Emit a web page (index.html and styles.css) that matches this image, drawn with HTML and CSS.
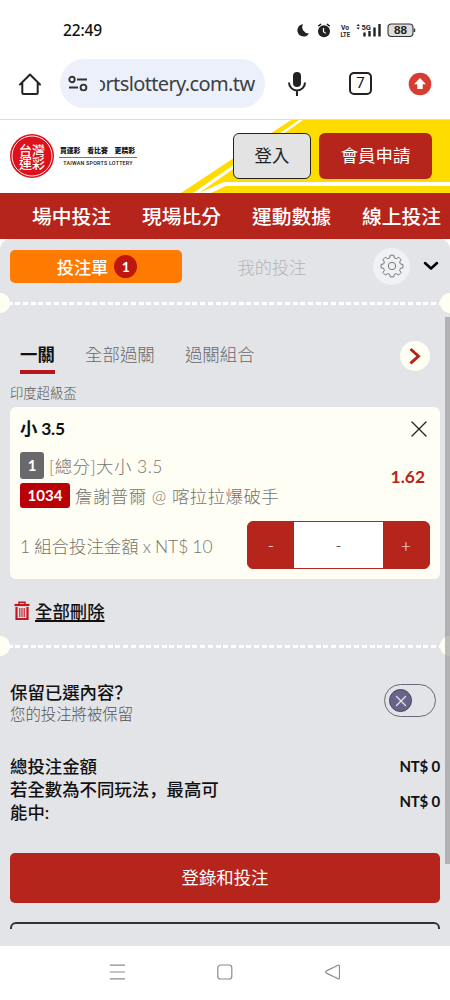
FILE: index.html
```html
<!DOCTYPE html>
<html lang="zh-Hant">
<head>
<meta charset="utf-8">
<title>台灣運彩</title>
<link rel="stylesheet" href="styles.css">
</head>
<body>
<div class="phone">
  <div class="status">
    <span class="clock">22:49</span>
    <svg class="status-icons" width="120" height="18" viewBox="296 22 120 18">
      <path d="M303 24.2a6.2 6.2 0 1 0 6 9.2 6.3 6.3 0 0 1-6-9.2z" fill="#222"/>
      <circle cx="324" cy="31.3" r="6" fill="#222"/>
      <path d="M318.3 26.2l2.8-2.2M329.700 26.200l-2.800-2.200" stroke="#222" stroke-width="1.5"/>
      <path d="M323.500 28v3.600l2.300 1.800" stroke="#fff" stroke-width="1.200" fill="none"/>
      <text x="341" y="29.500" class="tiny" textLength="8" lengthAdjust="spacingAndGlyphs">Vo</text>
      <text x="340.500" y="36.500" class="tiny" textLength="9.500" lengthAdjust="spacingAndGlyphs">LTE</text>
      <path d="M356.500 26l1.700-2 1.700 2zM356.500 27.500l1.700 2 1.700-2z" fill="#222"/>
      <text x="361.500" y="29.500" class="tiny5" textLength="9.500" lengthAdjust="spacingAndGlyphs">5G</text>
      <path d="M364.500 36.500v-4M369.500 36.500v-5.500M374.500 36.500v-9M379.500 36.500v-12.500" stroke="#222" stroke-width="2.400"/>
      <rect x="388" y="24" width="25" height="12.500" rx="3.500" fill="#ddd" stroke="#333" stroke-width="1.100"/>
      <path d="M414.500 28.500v3.500" stroke="#333" stroke-width="1.400"/>
      <text x="394" y="34.200" class="battery" textLength="13" lengthAdjust="spacingAndGlyphs">88</text>
    </svg>
  </div>
  <div class="browser">
    <svg class="home" width="24" height="24" viewBox="0 0 24 24" fill="none" stroke="#222" stroke-width="2" stroke-linejoin="round" stroke-linecap="round"><path d="M2 12.500L12 2.500l10 10M4.300 11.500V20.500q0 1.500 1.500 1.500h12.400q1.500 0 1.500-1.500V11.500"/></svg>
    <div class="omnibox">
      <svg width="20" height="18" viewBox="0 0 20 18" fill="none" stroke="#333" stroke-width="1.900"><circle cx="4" cy="4.500" r="2.700"/><path d="M9 4.500h10M1 12.500h9"/><circle cx="15.500" cy="12.500" r="2.900"/></svg>
      <div class="url"><span>ortslottery.com.tw</span></div>
    </div>
    <svg class="mic" width="20" height="28" viewBox="0 0 20 28" fill="none" stroke="#222" stroke-width="2"><rect x="6" y="2" width="8" height="15" rx="4" fill="#222" stroke="none"/><path d="M2 12.500a8 8 0 0 0 16 0M10 20.500v5.500"/></svg>
    <span class="tabcount">7</span>
    <svg class="update" width="24" height="24" viewBox="0 0 24 24"><circle cx="12" cy="12" r="11.300" fill="#d63c31"/><path d="M12 6l6 6.200h-3.300V17H9.300v-4.800H6z" fill="#fff"/></svg>
  </div>

  <header class="site">
    <svg class="stripes" width="450" height="73" viewBox="0 0 450 73">
      <path d="M181 73L291 0H450V73z" fill="#ffdc00"/>
      <path d="M199 73L303 0h-4L193 73z" fill="#fff"/>
      <path d="M199 73L224 62H450V66H226L211 73z" fill="#fff"/>
    </svg>
    <svg class="logo" width="46" height="46" viewBox="0 0 46 46">
      <circle cx="23" cy="23" r="22" fill="#dc111b"/>
      <circle cx="23" cy="23" r="20" fill="none" stroke="#fff" stroke-width=".9"/>
      <text x="10" y="21.500" textLength="26" class="seal">台灣</text>
      <text x="10" y="35" textLength="26" class="seal">運彩</text>
    </svg>
    <div class="slogan">
      <div class="slogan-zh"><span>買運彩</span><span>看比賽</span><span>更精彩</span></div>
      <div class="slogan-en">TAIWAN SPORTS LOTTERY</div>
    </div>
    <button class="btn login">登入</button>
    <button class="btn join">會員申請</button>
  </header>
  <nav class="mainnav"><span>場中投注</span><span>現場比分</span><span>運動數據</span><span>線上投注</span></nav>

  <main class="slip">
    <div class="sliphead">
      <div class="slip-tab">投注單<b class="count">1</b></div>
      <div class="my-bets">我的投注</div>
      <div class="gear">
        <svg width="24" height="24" viewBox="0 0 24 24" fill="none" stroke="#777" stroke-width="1" stroke-linejoin="round"><circle cx="12" cy="12" r="3.700"/><path d="M10.200 1.200h3.600l.5 2.700 2 .8 2.300-1.500 2.500 2.500-1.500 2.300.8 2 2.500.4v3.500l-2.500.5-.8 2 1.500 2.200-2.500 2.500-2.300-1.500-2 .8-.5 2.500h-3.600l-.5-2.500-2-.8-2.300 1.500-2.500-2.500L4.400 16.400l-.8-2-2.500-.5v-3.500l2.500-.4.8-2-1.500-2.300 2.500-2.500 2.300 1.500 2-.8z"/></svg>
      </div>
      <svg class="chev" width="16" height="10" viewBox="0 0 16 10" fill="none" stroke="#000" stroke-width="2.500" stroke-linecap="round" stroke-linejoin="round"><path d="M2 2l6 5.500L14 2"/></svg>
    </div>
    <div class="perf"></div>
    <div class="combos">
      <span class="combo on">一關</span><span class="combo">全部過關</span><span class="combo">過關組合</span>
      <span class="next"><svg width="14" height="18" viewBox="0 0 14 18" fill="none" stroke="#b5241a" stroke-width="2.900"><path d="M2.500 2l8 7.200-8 7.200"/></svg></span>
    </div>
    <div class="league">印度超級盃</div>
    <section class="card">
      <div class="pick"><b>小 3.5</b><svg width="16" height="16" viewBox="0 0 16 16" stroke="#222" stroke-width="1.300" stroke-linecap="round"><path d="M1 1l14 14M15 1L1 15"/></svg></div>
      <div class="match">
        <div>
          <div class="line l1"><span class="chip grey">1</span><span class="market">[總分]大小 3.5</span></div>
          <div class="line l2"><span class="chip red">1034</span><span class="teams">詹謝普爾 @ 喀拉拉爆破手</span></div>
        </div>
        <b class="odds">1.62</b>
      </div>
      <div class="stake">
        <span class="stake-label">1 組合投注金額 x NT$ 10</span>
        <div class="stepper"><span class="step">-</span><span class="value">-</span><span class="step">+</span></div>
      </div>
    </section>
    <div class="clear">
      <svg width="16" height="20" viewBox="0 0 16 20" fill="none" stroke="#c5161d"><path d="M.5 4h15" stroke-width="2.200"/><path d="M5 3V1.200h6V3" stroke-width="1.500"/><path d="M2.500 6v12h11V6" stroke-width="2.200"/><path d="M5.800 7v9M8 7v9M10.200 7v9" stroke-width="1.100"/></svg>
      <span>全部刪除</span>
    </div>
    <div class="perf"></div>
    <div class="keep">
      <div><div class="keep-title">保留已選內容<span class="punct" lang="zh-Hans">？</span></div><div class="keep-sub">您的投注將被保留</div></div>
      <span class="toggle"><span class="knob"><svg width="12" height="12" viewBox="0 0 12 12" stroke="#e4e5ea" stroke-width="1.300" stroke-linecap="round"><path d="M1.500 1.500l9 9M10.500 1.500l-9 9"/></svg></span></span>
    </div>
    <div class="total"><span>總投注金額</span><b>NT$ 0</b></div>
    <div class="total"><span class="wrap">若全數為不同玩法<span class="punct" lang="zh-Hans">，</span>最高可能中:</span><b>NT$ 0</b></div>
    <button class="submit">登錄和投注</button>
    <div class="clip"><div class="outline"></div></div>
    <div class="scrollbar"></div>
  </main>

  <footer class="sysnav">
    <svg width="230" height="16" viewBox="0 0 230 16" fill="none" stroke="#8c8c8c" stroke-width="1.200" stroke-linejoin="round"><path d="M0 1.200h15M0 8h15M0 14.800h15"/><rect x="107.800" y="1" width="14" height="14" rx="2.800"/><path d="M216.500 6.900L228 1.300q1.500-.5 1.500 1v11.400q0 1.500-1.500 1L216.500 9.100q-1.800-1.100 0-2.200z"/></svg>
  </footer>
</div>
</body>
</html>
```

FILE: styles.css
```css
* { box-sizing: border-box; }
body { margin: 0; background: #fff; font-family: Lato, "Noto Sans CJK TC", sans-serif; font-size: 17.4px; color: #111; }
button { font: inherit; padding: 0; border: 0; }
svg { display: block; flex: none; }
.phone { width: 450px; height: 1000px; overflow: hidden; display: flex; flex-direction: column; }
.phone > * { flex: none; }

.status { height: 50px; padding: 22px 34px 0 63px; display: flex; justify-content: space-between; }
.clock { font: 500 15.500px/17px "Noto Sans", sans-serif; letter-spacing: -.15px; color: #111; }
.tiny { font: 700 7px Roboto, sans-serif; fill: #222; }
.tiny5 { font: 700 8px Roboto, sans-serif; fill: #222; }
.battery { font: 700 10px "Liberation Sans", sans-serif; fill: #222; }

.browser { height: 70px; padding: 9px 18px 11px; display: flex; align-items: center; border-bottom: 1px solid #ddd; }
.omnibox { margin-left: 18px; width: 205px; height: 49px; border-radius: 25px; background: #ebf0fa; display: flex; align-items: center; padding-left: 8px; }
.url { margin-left: 12px; width: 160px; overflow: hidden; font: 400 20px/30px "Noto Sans", sans-serif; letter-spacing: -.63px; color: #3c4043; white-space: nowrap; }
.url span { margin-left: -6px; }
.mic { margin-left: 22px; }
.tabcount { margin-left: 42px; width: 23px; height: 23px; border: 2px solid #222; border-radius: 5px; font: 15px/19px Roboto, sans-serif; text-align: center; }
.update { margin-left: auto; }

.site { position: relative; height: 73px; display: flex; padding: 13px 18px 0 9px; }
.stripes { position: absolute; inset: 0; z-index: -1; }
.seal { font: 500 13px "Noto Sans CJK TC", sans-serif; fill: #fff; }
.slogan { margin: 12px 0 0 4px; width: 78px; }
.slogan-zh { display: flex; justify-content: space-between; font-size: 6.800px; line-height: 11px; font-weight: 900; padding: 0 2px 0 1px; height: 13px; border-bottom: 1px solid #777; white-space: nowrap; }
.slogan-en { font: 500 5.300px/10px Roboto, sans-serif; letter-spacing: .25px; text-align: center; white-space: nowrap; }
.btn { height: 46px; border-radius: 6px; line-height: 44px; }
.login { margin-left: 96px; width: 78px; border: 1.500px solid #222; background: #e3e3e4; color: #222; }
.join { margin-left: 8px; width: 113px; background: #b6251b; color: #fff; }

.mainnav { height: 46px; background: #b6251b; color: #fff; display: flex; gap: 31px; padding-left: 32px; font-size: 19.750px; font-weight: 500; line-height: 47px; white-space: nowrap; overflow: hidden; }

.slip { position: relative; height: 707px; background: #e3e4e7; border-radius: 10px 10px 0 0; overflow: hidden; padding: 0 10px; }
.sliphead { height: 54px; display: flex; align-items: center; margin-right: -2px; }
.slip-tab { width: 172px; height: 33px; border-radius: 5px; background: #ff7a00; color: #fff; font-size: 17.200px; font-weight: 500; display: flex; align-items: center; justify-content: center; gap: 6px; padding-left: 2px; }
.count { width: 23px; height: 23px; border-radius: 50%; background: #bd170f; font-size: 14px; line-height: 23px; text-align: center; }
.my-bets { margin-left: 55.500px; width: 69px; color: #b3b4b7; font-weight: 300; font-size: 17.200px; white-space: nowrap; }
.gear { margin-left: 66.500px; width: 37px; height: 37px; border-radius: 50%; background: #f0f1f5; display: flex; align-items: center; justify-content: center; }
.chev { margin-left: 12.500px; }
.perf { height: 20px; margin: 0 -10px; background:
  radial-gradient(circle at 0 50%, #fffef2 9.500px, transparent 10.500px),
  radial-gradient(circle at 100% 50%, #fffef2 9.500px, transparent 10.500px),
  repeating-linear-gradient(90deg, #fff 0 5px, transparent 5px 7.700px) 0 50% / 100% 3px no-repeat; }

.combos { height: 67px; display: flex; gap: 30.300px; padding: 29px 10px 0; color: #68686c; font-weight: 300; }
.combo { height: 32px; line-height: 26px; }
.on { color: #111; font-weight: 700; border-bottom: 4px solid #b9161b; }
.next { margin: -1px 0 0 auto; width: 30px; height: 30px; border-radius: 50%; background: #fffef2; display: flex; align-items: center; justify-content: center; }
.league { height: 27px; padding-top: 3px; line-height: 21px; font-size: 13.300px; font-weight: 300; color: #555; }

.card { height: 172px; border-radius: 6px; background: #fffef5; padding: 10px 10px 0; }
.pick { height: 34px; line-height: 24px; display: flex; justify-content: space-between; padding-right: 3px; }
.pick b { letter-spacing: -.2px; }
.pick svg { margin-top: 4px; }
.match { display: flex; justify-content: space-between; padding-right: 5px; }
.line { display: flex; align-items: center; gap: 5px; color: #77736f; font-weight: 300; white-space: nowrap; }
.l1 { height: 29px; }
.l2 { height: 31px; }
.market { letter-spacing: .5px; }
.teams { letter-spacing: .5px; }
.chip { color: #fff; font-size: 15px; font-weight: 700; border-radius: 3px; text-align: center; }
.grey { width: 24px; height: 27px; line-height: 27px; background: #69696c; }
.red { width: 50px; height: 25px; line-height: 25px; background: #b90006; }
.odds { color: #b6251b; line-height: 52px; }
.stake { display: flex; justify-content: space-between; align-items: center; height: 48px; margin-top: 10px; color: #77736f; font-weight: 300; }
.stake-label { word-spacing: -.6px; }
.stepper { width: 183px; height: 48px; border: 1px solid #b6251b; border-radius: 6px; background: #b6251b; display: flex; overflow: hidden; font-size: 17px; line-height: 48px; text-align: center; }
.step { width: 46px; color: #fff; }
.value { flex: 1; background: #fff; color: #222; }
.clear { height: 57px; padding: 22px 0 0 4px; display: flex; gap: 5px; font-weight: 500; }
.clear span { line-height: 22px; text-decoration: underline; text-decoration-thickness: 2px; text-underline-offset: 2px; }

.keep { height: 99px; padding: 25px 4px 0 0; display: flex; justify-content: space-between; }
.keep-title { font-weight: 500; line-height: 23px; }
.punct { font-family: "Noto Sans CJK SC", sans-serif; line-height: 1; }
.keep-sub { font-size: 15.400px; font-weight: 300; line-height: 21px; color: #555559; }
.toggle { margin-top: 3px; width: 52px; height: 33px; border: 1px solid #68667a; border-radius: 17px; padding: 4px; }
.knob { width: 23px; height: 23px; border-radius: 50%; background: #67648a; border: 1px solid #454360; display: flex; align-items: center; justify-content: center; }
.total { display: flex; justify-content: space-between; align-items: center; line-height: 23px; font-weight: 500; }
.total b { font-size: 15px; letter-spacing: -.2px; white-space: nowrap; }
.wrap { width: 211px; line-break: anywhere; }
.submit { display: block; width: 430px; height: 50px; margin-top: 29px; border-radius: 5px; background: #b6251b; color: #fff; line-height: 50px; }
.clip { height: 7px; margin-top: 19px; overflow: hidden; }
.outline { height: 50px; border: 2px solid #333338; border-radius: 6px; background: #e5e5e7; }
.scrollbar { position: absolute; right: 0; top: 78px; width: 5px; height: 547px; background: rgba(130, 130, 133, .52); }

.sysnav { height: 54px; background: #fff; padding: 18px 110px 0; }
```
